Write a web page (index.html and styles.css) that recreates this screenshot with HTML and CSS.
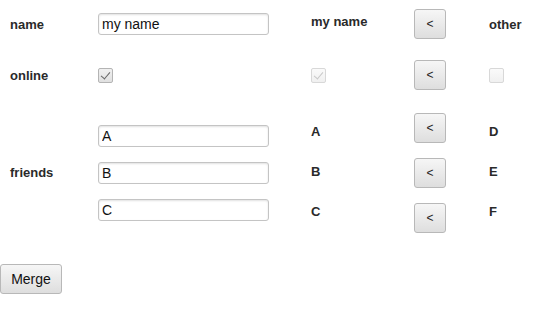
FILE: index.html
```html
<!DOCTYPE html>
<html>
<head>
  <meta charset="UTF-8">
  <title>Merge</title>
  <link rel="stylesheet" href="styles.css">
</head>
<body>
  <div class="merge-grid">
    <!-- name -->
    <div class="field-label">name</div>
    <div class="cell"><input type="text" class="text-input" value="my name"></div>
    <div class="cell value value-top">my name</div>
    <div class="cell"><button class="copy-button">&lt;</button></div>
    <div class="cell value">other</div>

    <!-- online -->
    <div class="field-label">online</div>
    <div class="cell"><span class="check checked"></span></div>
    <div class="cell"><span class="check checked disabled"></span></div>
    <div class="cell"><button class="copy-button">&lt;</button></div>
    <div class="cell"><span class="check disabled"></span></div>

    <!-- friends -->
    <div class="field-label">friends</div>
    <div class="cell stack inputs">
      <input type="text" class="text-input" value="A">
      <input type="text" class="text-input" value="B">
      <input type="text" class="text-input" value="C">
    </div>
    <div class="cell stack values">
      <div class="value">A</div>
      <div class="value">B</div>
      <div class="value">C</div>
    </div>
    <div class="cell stack buttons">
      <button class="copy-button">&lt;</button>
      <button class="copy-button">&lt;</button>
      <button class="copy-button">&lt;</button>
    </div>
    <div class="cell stack values">
      <div class="value">D</div>
      <div class="value">E</div>
      <div class="value">F</div>
    </div>
  </div>

  <button class="merge-button">Merge</button>
</body>
</html>
```

FILE: styles.css
```css
body {
  margin: 0;
  font-family: "Liberation Sans", Arial, sans-serif;
  color: #222;
  background: #fff;
}

.merge-grid {
  display: grid;
  grid-template-columns: 98px 213px 103px 75px 1fr;
  grid-template-rows: 48px 54px 141px;
  align-items: center;
}

.field-label {
  padding-left: 10px;
  font-size: 13px;
  font-weight: bold;
  color: #2a2a2a;
}

.cell {
  display: flex;
  align-items: center;
}

.value {
  font-size: 13px;
  font-weight: bold;
  color: #2a2a2a;
}

.value-top {
  margin-bottom: 6px;
}

.text-input {
  box-sizing: border-box;
  width: 171px;
  height: 22px;
  padding: 0 3px;
  border: 1px solid #c4c4c4;
  border-radius: 3px;
  box-shadow: inset 0 1px 2px rgba(0, 0, 0, 0.12);
  font-family: "Liberation Sans", Arial, sans-serif;
  font-size: 14px;
  color: #111;
  background: #fff;
}

.stack {
  flex-direction: column;
  align-items: flex-start;
}

.inputs {
  gap: 15px;
}

.values .value {
  height: 40px;
  line-height: 37px;
}

.buttons {
  gap: 15px;
}

.copy-button {
  width: 32px;
  height: 30px;
  padding: 0;
  border: 1px solid #b8b8b8;
  border-radius: 3px;
  background: linear-gradient(#f6f6f6, #dedede);
  font-family: "Liberation Sans", Arial, sans-serif;
  font-size: 12px;
  color: #222;
}

.check {
  box-sizing: border-box;
  width: 15px;
  height: 15px;
  border: 1px solid #b4b4b4;
  border-radius: 2px;
  background: linear-gradient(#f0f0f0, #e0e0e0);
  position: relative;
}

.check.checked::after {
  content: "";
  position: absolute;
  left: 4px;
  top: 1px;
  width: 4px;
  height: 8px;
  border: solid #666;
  border-width: 0 1.5px 1.5px 0;
  transform: rotate(40deg);
}

.check.disabled {
  border-color: #d8d8d8;
  background: linear-gradient(#fafafa, #f0f0f0);
}

.check.checked.disabled::after {
  border-color: #c8c8c8;
}

.merge-button {
  margin-top: 21px;
  width: 62px;
  height: 30px;
  padding: 0;
  border: 1px solid #b8b8b8;
  border-radius: 3px;
  background: linear-gradient(#f6f6f6, #dedede);
  font-family: "Liberation Sans", Arial, sans-serif;
  font-size: 14px;
  color: #111;
}
```
